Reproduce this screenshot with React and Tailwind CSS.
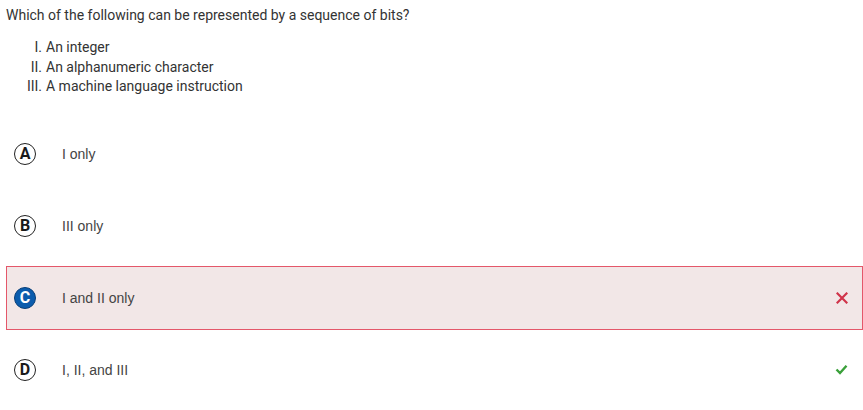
const choices = [
  { letter: 'A', text: 'I only' },
  { letter: 'B', text: 'III only' },
  { letter: 'C', text: 'I and II only', selected: true, mark: 'wrong' },
  { letter: 'D', text: 'I, II, and III', mark: 'right' },
];

const items = [
  ['I.', 'An integer'],
  ['II.', 'An alphanumeric character'],
  ['III.', 'A machine language instruction'],
];

function Bubble({ letter, selected }) {
  return (
    <span
      className={
        'flex h-[22px] w-[22px] items-center justify-center rounded-full text-[16px] font-bold leading-none ' +
        (selected ? 'bg-[#0b5cad] text-white border-[1.5px] border-[#0a3f78]' : 'border-[1.5px] border-[#222] text-[#1a1a1a] bg-white')
      }
      style={{ fontFamily: 'Roboto, sans-serif' }}
    >
      {letter}
    </span>
  );
}

function Cross() {
  return (
    <svg width="12" height="12" viewBox="0 0 12 12">
      <path d="M1.5 1.5 L10.5 10.5 M10.5 1.5 L1.5 10.5" stroke="#d0344a" strokeWidth="2.2" strokeLinecap="square" fill="none" />
    </svg>
  );
}

function Check() {
  return (
    <svg width="13" height="11" viewBox="0 0 13 11">
      <path d="M1.5 5.5 L5 9 L11.5 1.8" stroke="#3aa03a" strokeWidth="2.4" fill="none" />
    </svg>
  );
}

export default function App() {
  return (
    <div className="w-[863px] h-[410px] bg-white overflow-hidden pt-[5px]">
      <p className="ml-[6px] h-5 leading-5 text-[14px] text-[#333]" style={{ fontFamily: 'Roboto, sans-serif' }}>
        Which of the following can be represented by a sequence of bits?
      </p>
      <div className="mt-[13px] grid grid-cols-[42px_auto] justify-start text-[14px] leading-[19.5px] text-[#333]" style={{ fontFamily: 'Roboto, sans-serif' }}>
        {items.map(([n, t]) => (
          <div key={n} className="contents">
            <span className="text-right">{n}</span>
            <span className="pl-1">{t}</span>
          </div>
        ))}
      </div>
      <div className="mt-[25px] ml-[6px] flex flex-col gap-2">
        {choices.map((c) => (
          <div
            key={c.letter}
            className={
              'flex h-16 items-center border pl-[7px] pr-[14px] ' +
              (c.selected ? 'border-[#e4576a] bg-[#f2e7e7]' : 'border-transparent')
            }
          >
            <Bubble letter={c.letter} selected={c.selected} />
            <span className="ml-[26px] flex-1 pt-px text-[14px] text-[#444]" style={{ fontFamily: '"Liberation Sans", Arial, sans-serif' }}>
              {c.text}
            </span>
            {c.mark === 'wrong' && <Cross />}
            {c.mark === 'right' && <Check />}
          </div>
        ))}
      </div>
    </div>
  );
}
